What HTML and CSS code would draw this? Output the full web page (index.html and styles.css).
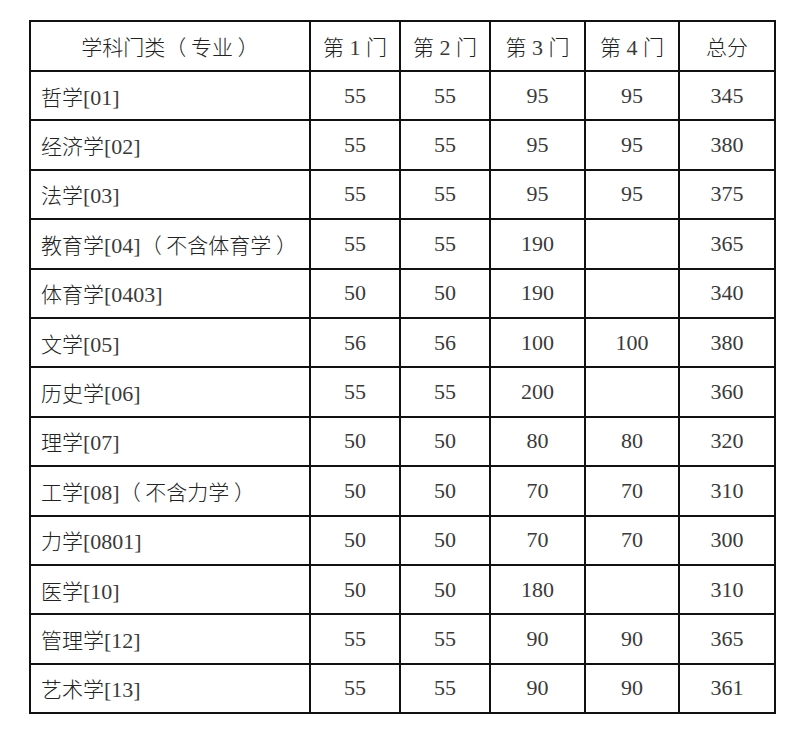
FILE: index.html
```html
<!DOCTYPE html>
<html lang="zh-CN">
<head>
<meta charset="utf-8">
<title>分数线</title>
<link rel="stylesheet" href="styles.css">
</head>
<body>
<table class="score-table">
  <colgroup>
    <col class="c-name">
    <col class="c1">
    <col class="c2">
    <col class="c3">
    <col class="c4">
    <col class="c5">
  </colgroup>
  <thead>
    <tr>
      <th class="head-name">学科门类（&nbsp;专业&nbsp;）</th>
      <th>第<span class="num"> 1 </span>门</th>
      <th>第<span class="num"> 2 </span>门</th>
      <th>第<span class="num"> 3 </span>门</th>
      <th>第<span class="num"> 4 </span>门</th>
      <th>总分</th>
    </tr>
  </thead>
  <tbody>
    <tr><td class="name">哲学<span class="num">[01]</span></td><td>55</td><td>55</td><td>95</td><td>95</td><td>345</td></tr>
    <tr><td class="name">经济学<span class="num">[02]</span></td><td>55</td><td>55</td><td>95</td><td>95</td><td>380</td></tr>
    <tr><td class="name">法学<span class="num">[03]</span></td><td>55</td><td>55</td><td>95</td><td>95</td><td>375</td></tr>
    <tr><td class="name">教育学<span class="num">[04]</span>（&nbsp;不含体育学&nbsp;）</td><td>55</td><td>55</td><td>190</td><td></td><td>365</td></tr>
    <tr><td class="name">体育学<span class="num">[0403]</span></td><td>50</td><td>50</td><td>190</td><td></td><td>340</td></tr>
    <tr><td class="name">文学<span class="num">[05]</span></td><td>56</td><td>56</td><td>100</td><td>100</td><td>380</td></tr>
    <tr><td class="name">历史学<span class="num">[06]</span></td><td>55</td><td>55</td><td>200</td><td></td><td>360</td></tr>
    <tr><td class="name">理学<span class="num">[07]</span></td><td>50</td><td>50</td><td>80</td><td>80</td><td>320</td></tr>
    <tr><td class="name">工学<span class="num">[08]</span>（&nbsp;不含力学&nbsp;）</td><td>50</td><td>50</td><td>70</td><td>70</td><td>310</td></tr>
    <tr><td class="name">力学<span class="num">[0801]</span></td><td>50</td><td>50</td><td>70</td><td>70</td><td>300</td></tr>
    <tr><td class="name">医学<span class="num">[10]</span></td><td>50</td><td>50</td><td>180</td><td></td><td>310</td></tr>
    <tr><td class="name">管理学<span class="num">[12]</span></td><td>55</td><td>55</td><td>90</td><td>90</td><td>365</td></tr>
    <tr><td class="name">艺术学<span class="num">[13]</span></td><td>55</td><td>55</td><td>90</td><td>90</td><td>361</td></tr>
  </tbody>
</table>
</body>
</html>
```

FILE: styles.css
```css
html, body {
  margin: 0;
  padding: 0;
  background: #ffffff;
}

body {
  padding: 20px 0 0 29px;
}

.score-table {
  border-collapse: collapse;
  table-layout: fixed;
  width: 745px;
  color: #222222;
  font-size: 21px;
  text-spacing-trim: space-all;
}

.c-name { width: 280px; }
.c1 { width: 90px; }
.c2 { width: 90px; }
.c3 { width: 95px; }
.c4 { width: 94px; }
.c5 { width: 96px; }

.score-table th,
.score-table td {
  border: 2px solid #111111;
  text-align: center;
  vertical-align: middle;
  padding: 0;
}

.score-table th {
  height: 48px;
  font-family: "Noto Sans CJK SC", sans-serif;
  font-weight: 300;
  font-size: 21px;
}

.score-table td {
  height: 47.4px;
  font-family: "Liberation Serif", "Noto Sans CJK SC", serif;
  font-weight: 400;
  font-size: 22px;
  color: #3a3a3a;
}

.score-table td.name {
  text-align: left;
  padding-left: 10px;
  font-family: "Noto Sans CJK SC", sans-serif;
  font-weight: 300;
  font-size: 21px;
  color: #222222;
}

.num {
  font-family: "Liberation Serif", serif;
  font-weight: 400;
  font-size: 22px;
  color: #3a3a3a;
}
```
